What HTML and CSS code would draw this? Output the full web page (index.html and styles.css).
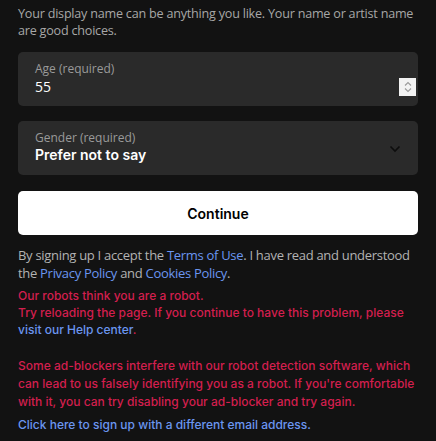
FILE: index.html
```html
<!DOCTYPE html>
<html>
<head>
<meta charset="utf-8">
<link rel="stylesheet" href="styles.css">
</head>
<body>
<div class="page">
  <p class="intro">Your display name can be anything you like. Your name or artist name are good choices.</p>
  <div class="field">
    <div class="label">Age (required)</div>
    <div class="value-row">
      <span class="value">55</span>
      <span class="spinner">
        <svg width="10" height="14" viewBox="0 0 10 14"><path d="M2 5.5 L5 2.5 L8 5.5" fill="none" stroke="#9a9a9a" stroke-width="1.1"/><path d="M2 8.5 L5 11.5 L8 8.5" fill="none" stroke="#9a9a9a" stroke-width="1.1"/></svg>
      </span>
    </div>
  </div>
  <div class="field select">
    <div class="select-text">
      <div class="label tight">Gender (required)</div>
      <div class="value strong">Prefer not to say</div>
    </div>
    <svg class="chevron" width="12" height="8" viewBox="0 0 12 8"><path d="M1.5 1.5 L6 6 L10.5 1.5" fill="none" stroke="#0d0d0d" stroke-width="1.6"/></svg>
  </div>
  <button class="continue">Continue</button>
  <p class="terms">By signing up I accept the <a href="#">Terms of Use</a>. I have read and understood the <a href="#">Privacy Policy</a> and <a href="#">Cookies Policy</a>.</p>
  <div class="error">
    <p>Our robots think you are a robot.<br>Try reloading the page. If you continue to have this problem, please <a href="#">visit our Help center</a>.</p>
    <p class="adblock">Some ad-blockers interfere with our robot detection software, which can lead to us falsely identifying you as a robot. If you're comfortable with it, you can try disabling your ad-blocker and try again.</p>
  </div>
  <a class="different" href="#">Click here to sign up with a different email address.</a>
</div>
</body>
</html>
```
FILE: styles.css
```css
html, body {
  margin: 0;
  padding: 0;
  background: #121212;
}
.page {
  padding: 5px 18px 0 18px;
  display: flex;
  flex-direction: column;
}
.intro {
  margin: 0 0 13px 0;
  font-family: "Open Sans", sans-serif;
  font-size: 12.6px;
  line-height: 17px;
  letter-spacing: -0.22px;
  color: #a7a7a7;
}
.field {
  background: #2a2a2a;
  border-radius: 5px;
  height: 54px;
  box-sizing: border-box;
  padding: 9px 17px 0 17px;
}
.label {
  font-family: "Open Sans", sans-serif;
  font-size: 12px;
  line-height: 16px;
  color: #9a9a9a;
}
.label.tight {
  line-height: 14px;
}
.value-row {
  display: flex;
  align-items: center;
  justify-content: space-between;
  margin-right: -15px;
}
.value {
  font-family: "Open Sans", sans-serif;
  font-size: 14px;
  line-height: 20px;
  color: #ffffff;
}
.spinner {
  width: 17px;
  height: 18px;
  background: #f2f2f2;
  display: flex;
  align-items: center;
  justify-content: center;
}
.select {
  margin-top: 15px;
  display: flex;
  align-items: center;
  justify-content: space-between;
  padding-top: 10px;
}
.select-text {
  align-self: flex-start;
}
.strong {
  font-family: "Inter", sans-serif;
  font-weight: 600;
  font-size: 14px;
  line-height: 20px;
}
.chevron {
  margin-top: -8px;
}
.continue {
  margin-top: 16px;
  height: 44px;
  border: none;
  border-radius: 5px;
  background: #ffffff;
  color: #000000;
  font-family: "Inter", sans-serif;
  font-weight: 600;
  font-size: 14px;
  cursor: pointer;
}
.terms {
  margin: 11px 0 0 0;
  font-family: "Open Sans", sans-serif;
  font-size: 13px;
  line-height: 18px;
  letter-spacing: -0.3px;
  color: #b3b3b3;
}
a {
  color: #6b96f0;
  text-decoration: none;
}
.error {
  margin-top: 5px;
  font-family: "Inter", sans-serif;
  font-weight: 500;
  font-size: 12px;
  line-height: 17px;
  color: #d31f4e;
}
.error p {
  margin: 0;
}
.error .adblock {
  margin-top: 19px;
  line-height: 18px;
}
.different {
  margin-top: 5px;
  font-family: "Inter", sans-serif;
  font-weight: 500;
  font-size: 12px;
  line-height: 18px;
}
```
